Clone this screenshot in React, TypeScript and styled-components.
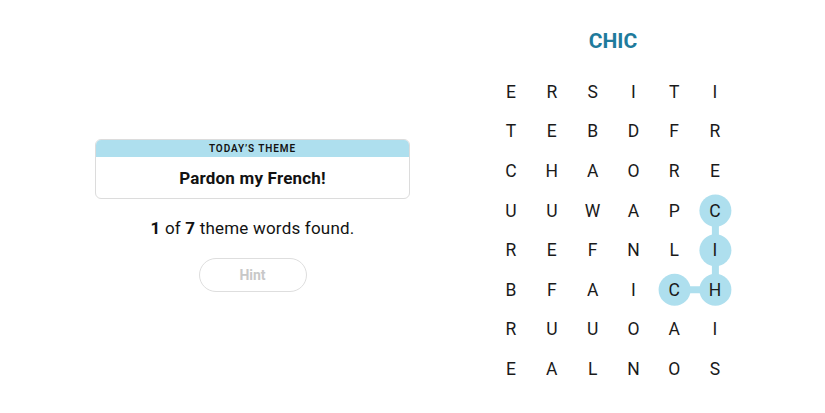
import React from "react";
import styled, { createGlobalStyle } from "styled-components";

const Global = createGlobalStyle`
  html, body { margin: 0; padding: 0; background: #fff; }
  body { font-family: "Roboto", "Liberation Sans", sans-serif; color: #121212; }
`;

const CELL_W = 40.8;
const CELL_H = 39.6;

const Page = styled.div`
  display: flex;
  width: 825px;
  height: 413px;
`;

const LeftCol = styled.div`
  width: 505px;
  display: flex;
  flex-direction: column;
  align-items: center;
  padding-top: 139px;
  box-sizing: border-box;
`;

const Card = styled.div`
  width: 315px;
  border: 1px solid #dcdcdc;
  border-radius: 6px;
  overflow: hidden;
  box-sizing: border-box;
`;

const CardHeader = styled.div`
  background: #aedfee;
  height: 17px;
  display: flex;
  align-items: center;
  justify-content: center;
  font-family: "Roboto", "Liberation Sans", sans-serif;
  font-size: 10px;
  font-weight: 600;
  letter-spacing: 0.9px;
  color: #121212;
`;

const CardBody = styled.div`
  height: 41px;
  display: flex;
  align-items: center;
  justify-content: center;
  font-family: "Roboto", "Liberation Sans", sans-serif;
  font-size: 17px;
  font-weight: 700;
  letter-spacing: 0.2px;
`;

const Count = styled.p`
  margin: 19px 0 0;
  font-family: "Roboto", "Liberation Sans", sans-serif;
  font-size: 17px;
  line-height: 20px;
  letter-spacing: 0.2px;
  b { font-weight: 700; }
`;

const HintButton = styled.button`
  margin-top: 20px;
  width: 108px;
  height: 34px;
  border: 1.5px solid #dedede;
  border-radius: 17px;
  background: #fff;
  color: #c8c8c8;
  font-family: "Roboto", "Liberation Sans", sans-serif;
  font-weight: 700;
  font-size: 14px;
`;

const RightCol = styled.div`
  display: flex;
  flex-direction: column;
  align-items: center;
  padding-top: 28px;
  width: ${CELL_W * 6}px;
  margin-left: -14.4px;
`;

const Title = styled.h1`
  margin: 0;
  font-family: "Roboto", "Liberation Sans", sans-serif;
  font-size: 21px;
  line-height: 26px;
  font-weight: 700;
  color: #1f7b9c;
`;

const Board = styled.div`
  position: relative;
  margin-top: 18px;
  width: ${CELL_W * 6}px;
  height: ${CELL_H * 8}px;
`;

const Overlay = styled.svg`
  position: absolute;
  left: 0;
  top: 0;
  width: 100%;
  height: 100%;
`;

const Grid = styled.div`
  position: relative;
  display: grid;
  grid-template-columns: repeat(6, ${CELL_W}px);
  grid-template-rows: repeat(8, ${CELL_H}px);
`;

const Cell = styled.div`
  display: flex;
  align-items: center;
  justify-content: center;
  font-family: "Roboto", "Liberation Sans", sans-serif;
  font-size: 17.5px;
  font-weight: 400;
  color: #1a1a1a;
`;

const rows = [
  "ERSITI",
  "TEBDFR",
  "CHAORE",
  "UUWAPC",
  "REFNLI",
  "BFAICH",
  "RUUOAI",
  "EALNOS",
];

const path: [number, number][] = [
  [3, 5],
  [4, 5],
  [5, 5],
  [5, 4],
];

const cx = (c: number) => c * CELL_W + CELL_W / 2;
const cy = (r: number) => r * CELL_H + CELL_H / 2;

export default function App() {
  return (
    <>
      <Global />
      <Page>
        <LeftCol>
          <Card>
            <CardHeader>TODAY’S THEME</CardHeader>
            <CardBody>Pardon my French!</CardBody>
          </Card>
          <Count>
            <b>1</b> of <b>7</b> theme words found.
          </Count>
          <HintButton>Hint</HintButton>
        </LeftCol>
        <RightCol>
          <Title>CHIC</Title>
          <Board>
            <Overlay viewBox={`0 0 ${CELL_W * 6} ${CELL_H * 8}`}>
              <polyline
                points={path.map(([r, c]) => `${cx(c)},${cy(r)}`).join(" ")}
                fill="none"
                stroke="#aedfee"
                strokeWidth={7}
              />
              {path.map(([r, c]) => (
                <circle key={`${r}-${c}`} cx={cx(c)} cy={cy(r)} r={16} fill="#aedfee" />
              ))}
            </Overlay>
            <Grid>
              {rows.map((row, r) =>
                row.split("").map((ch, c) => <Cell key={`${r}-${c}`}>{ch}</Cell>)
              )}
            </Grid>
          </Board>
        </RightCol>
      </Page>
    </>
  );
}
